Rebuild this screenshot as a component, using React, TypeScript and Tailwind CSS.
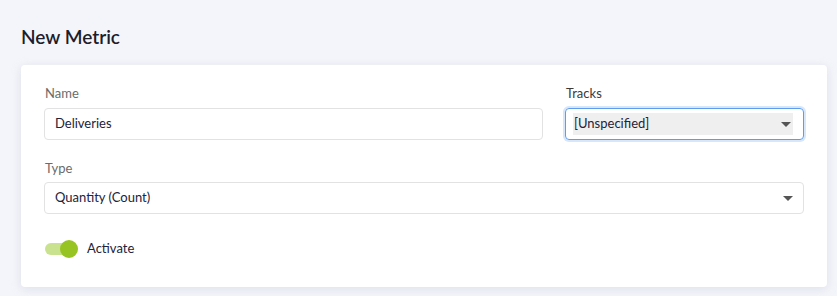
const App = () => {
    return (
        <div className="min-h-screen bg-[#f4f5fa] pl-[21px] pr-[10px] pt-[26px] pb-2 font-['Lato','Liberation_Sans',sans-serif]">
            <h1 className="text-[19px] font-semibold text-[#1d1d2b] leading-[22px] mb-[17px]">New Metric</h1>

            <div className="bg-white rounded-[4px] shadow-[0_2px_10px_rgba(180,185,210,0.35)] px-[23px] pt-[20px] pb-[28px]">
                <div className="flex gap-[22px]">
                    {/* Name */}
                    <div className="flex-1">
                        <label className="block text-[13px] text-[#6b6b6b] leading-[16px] mb-[7px] ml-[1px]">Name</label>
                        <div className="h-[32px] border border-[#e2e2e2] rounded-[4px] flex items-center px-[10px] text-[13px] text-[#23233a]">
                            Deliveries
                        </div>
                    </div>

                    {/* Tracks */}
                    <div className="w-[239px]">
                        <label className="block text-[13px] text-[#3a3a3a] leading-[16px] mb-[7px] ml-[1px]">Tracks</label>
                        <div className="h-[32px] border border-[#5e9cf0] rounded-[4px] ring-2 ring-[#d6e6fb] flex items-center pl-[7px] pr-[10px]">
                            <div className="flex-1 h-[22px] bg-[#efefef] flex items-center justify-between pl-[1px] pr-[2px] text-[13px] text-[#23233a]">
                                <span>[Unspecified]</span>
                                <span className="w-0 h-0 border-l-[5px] border-r-[5px] border-t-[5px] border-l-transparent border-r-transparent border-t-[#555]" />
                            </div>
                        </div>
                    </div>
                </div>

                {/* Type */}
                <div className="mt-[20px]">
                    <label className="block text-[13px] text-[#6b6b6b] leading-[16px] mb-[6px] ml-[1px]">Type</label>
                    <div className="h-[32px] border border-[#e2e2e2] rounded-[4px] flex items-center justify-between pl-[10px] pr-[10px] text-[13px] text-[#23233a]">
                        <span>Quantity (Count)</span>
                        <span className="w-0 h-0 border-l-[5px] border-r-[5px] border-t-[5px] border-l-transparent border-r-transparent border-t-[#555]" />
                    </div>
                </div>

                {/* Activate */}
                <div className="mt-[25px] flex items-center gap-[9px] ml-[1px]">
                    <div className="relative w-[33px] h-[18px] flex items-center">
                        <div className="w-[30px] h-[12px] rounded-full bg-[#c8e28f]" />
                        <div className="absolute right-0 top-0 w-[18px] h-[18px] rounded-full bg-[#97c423]" />
                    </div>
                    <span className="text-[13px] text-[#23233a]">Activate</span>
                </div>
            </div>
        </div>
    );
};

export default App;
